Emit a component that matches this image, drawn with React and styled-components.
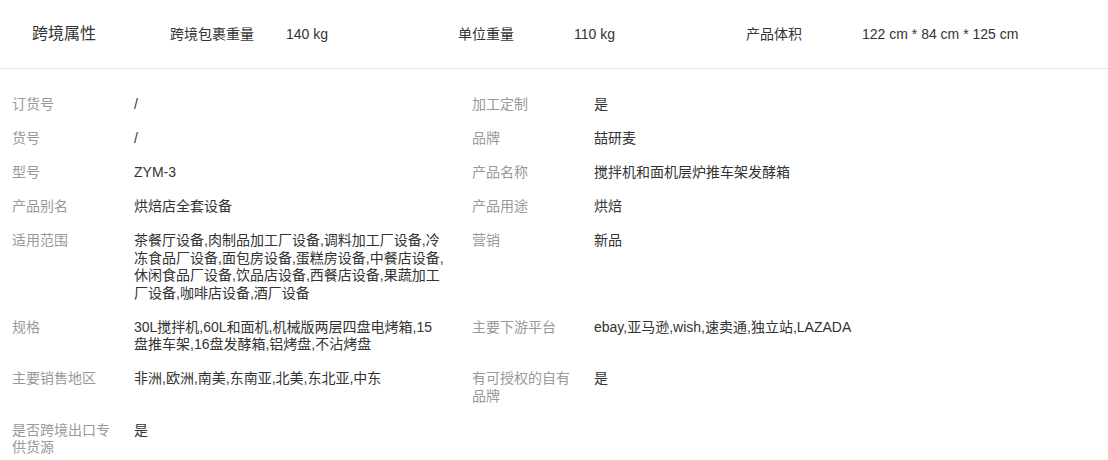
import React from 'react';
import styled, { createGlobalStyle } from 'styled-components';

const GlobalStyle = createGlobalStyle`
  body {
    margin: 0;
    background: #fff;
    font-family: "Liberation Sans", "Noto Sans CJK SC", sans-serif;
    color: #333;
  }
`;

const Page = styled.div`
  width: 1108px;
  background: #fff;
`;

const TopBar = styled.div`
  display: flex;
  align-items: center;
  height: 68px;
  padding-left: 32px;
  border-bottom: 1px solid #e8e8e8;
`;

const Title = styled.div`
  width: 138px;
  font-size: 16px;
  line-height: 20px;
  color: #333;
`;

const TopItem = styled.div`
  display: flex;
  align-items: baseline;
  width: 288px;
  font-size: 14px;
  line-height: 18px;
  color: #333;
`;

const TopLabel = styled.div`
  width: 116px;
`;

const Details = styled.div`
  display: grid;
  grid-template-columns: 460px 460px;
  row-gap: 16.5px;
  padding: 27px 0 0 12px;
`;

const Field = styled.div`
  display: flex;
  align-items: flex-start;
  font-size: 14px;
  line-height: 17.5px;
`;

const Label = styled.div`
  width: 102px;
  padding-right: 20px;
  color: #999;
  flex-shrink: 0;
`;

const Value = styled.div`
  width: 311px;
  color: #333;
`;

const cross = [
  ['跨境包裹重量', '140 kg'],
  ['单位重量', '110 kg'],
  ['产品体积', '122 cm * 84 cm * 125 cm'],
];

const fields = [
  ['订货号', '/'],
  ['加工定制', '是'],
  ['货号', '/'],
  ['品牌', '喆研麦'],
  ['型号', 'ZYM-3'],
  ['产品名称', '搅拌机和面机层炉推车架发酵箱'],
  ['产品别名', '烘焙店全套设备'],
  ['产品用途', '烘焙'],
  ['适用范围', '茶餐厅设备,肉制品加工厂设备,调料加工厂设备,冷冻食品厂设备,面包房设备,蛋糕房设备,中餐店设备,休闲食品厂设备,饮品店设备,西餐店设备,果蔬加工厂设备,咖啡店设备,酒厂设备'],
  ['营销', '新品'],
  ['规格', '30L搅拌机,60L和面机,机械版两层四盘电烤箱,15盘推车架,16盘发酵箱,铝烤盘,不沾烤盘'],
  ['主要下游平台', 'ebay,亚马逊,wish,速卖通,独立站,LAZADA'],
  ['主要销售地区', '非洲,欧洲,南美,东南亚,北美,东北亚,中东'],
  ['有可授权的自有品牌', '是'],
  ['是否跨境出口专供货源', '是'],
];

export default function App() {
  return (
    <Page>
      <GlobalStyle />
      <TopBar>
        <Title>跨境属性</Title>
        {cross.map(([label, value]) => (
          <TopItem key={label}>
            <TopLabel>{label}</TopLabel>
            <div>{value}</div>
          </TopItem>
        ))}
      </TopBar>
      <Details>
        {fields.map(([label, value]) => (
          <Field key={label}>
            <Label>{label}</Label>
            <Value>{value}</Value>
          </Field>
        ))}
      </Details>
    </Page>
  );
}
